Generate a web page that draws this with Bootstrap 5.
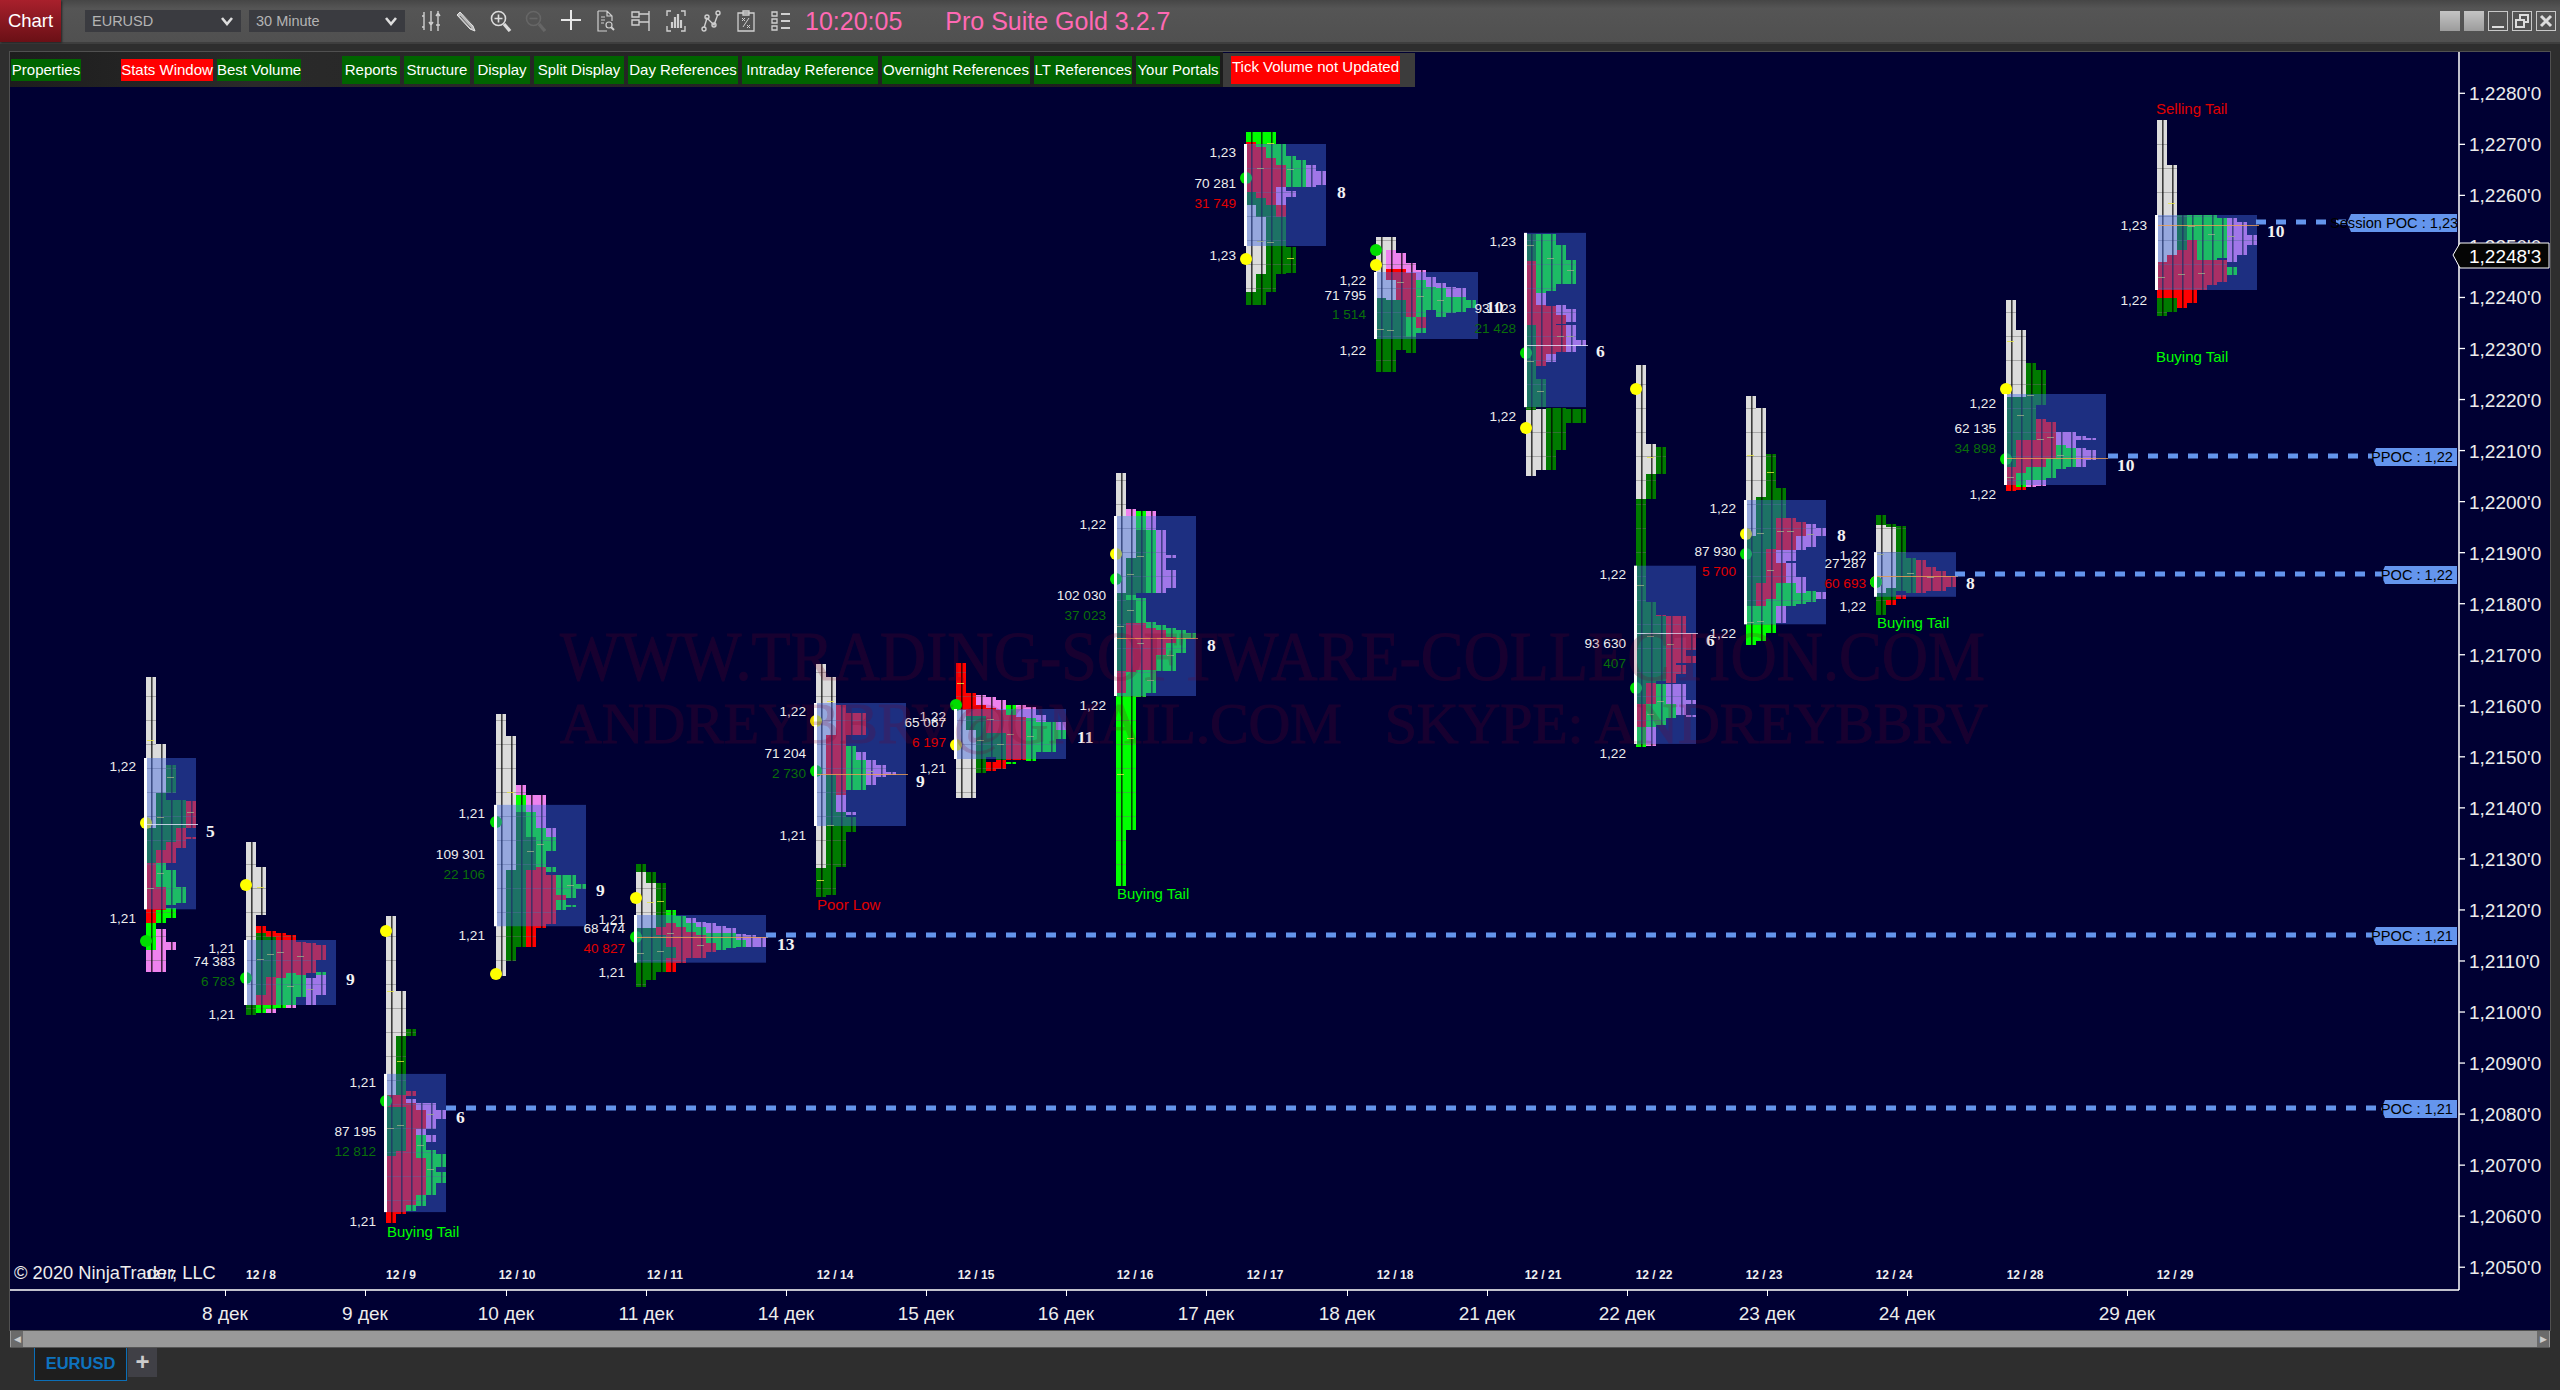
<!DOCTYPE html>
<html lang="ru">
<head>
<meta charset="utf-8">
<title>EURUSD Chart</title>
<link href="https://cdn.jsdelivr.net/npm/bootstrap@5.3.0/dist/css/bootstrap.min.css" rel="stylesheet">
<style>
html,body{height:100%;overflow:hidden}
body{background:#2e2e2e;font-family:"Liberation Sans",Arial,sans-serif;color:#eee}
.top-strip{height:44px;background:linear-gradient(#464646,#555 20%,#505050);border-bottom:2px solid #3e3e3e}
.chart-tab{width:61px;height:42px;background:linear-gradient(#a8202c,#6a1016);color:#fff;font-size:18.500px;line-height:42px;text-align:center;box-shadow:1px 1px 2px #222}
.combo-box{width:156px;height:22px;padding:0 0 0 7px;background-color:#3a3b40;border:0;border-radius:0;color:#b4b4b4;font-size:14.500px;line-height:22px;
 background-image:url("data:image/svg+xml,%3Csvg xmlns='http://www.w3.org/2000/svg' viewBox='0 0 14 10'%3E%3Cpath d='M2 2l5 6 5-6' fill='none' stroke='%23ddd' stroke-width='2.6'/%3E%3C/svg%3E");background-size:14px 10px;background-position:right 7px center}
.combo-box:focus{box-shadow:none;color:#b4b4b4;background-color:#3a3b40}
.tool-icon{width:35px;height:22px;flex:none}
.tool-icon svg{display:block;margin:auto}
.pink-time{color:#ff69b4;font-size:25px;line-height:30px;white-space:nowrap}
.time-gap{margin-left:7px}
.suite-gap{margin-left:43px}
.win-btn{width:20px;height:20px}
.win-solid{background:linear-gradient(#c4c4c4,#9c9c9c)}
.win-line{border:1px solid #c8c8c8}
.band{height:8px;background:#2e2e2e}
.chart-host{height:1278px;margin:0 10px;background:#000033;outline:1px solid #505050}
.chart-host svg{display:block}
.btn-row{top:0;left:0}
.btn-left{height:35px;width:1213px;background:linear-gradient(90deg,#1d1d1d,#2a2a2a 20%,#1c1c1c);padding-left:1px}
.tool-btn{background:#006400;color:#fff;font-size:15px;line-height:28px;height:28px;padding:0;border:0;border-radius:0;white-space:nowrap;text-align:center}
.tool-btn:hover{background:#006400;color:#fff}
.tool-low{height:22px;line-height:22px}
.tool-red,.tool-red:hover{background:#f00}
.wd-70{width:70px}.wd-92{width:92px}.wd-84{width:84px}.wd-58{width:58px}.wd-66{width:66px}.wd-56{width:56px}.wd-90{width:90px}.wd-110{width:110px}.wd-136{width:136px}.wd-148{width:148px}.wd-98{width:98px}
.gap-40{margin-left:40px}
.gap-41{margin-left:41px}
.warn-wrap{background:#3c3c3c;height:34px;padding:3px 15px 0 8px;margin-top:1px;width:192px}
.warn-chip{background:#f00;color:#fff;font-size:15px;height:28px;line-height:22px;white-space:nowrap;text-align:center}
.scroll-strip{height:18px;margin:0 10px;background:#999;border-bottom:1px solid #555}
.scroll-end{width:12px;height:16px;background:#6b6b6b;margin:1px;color:#ccc;font-size:9px;line-height:16px;text-align:center}
.tab-strip{height:34px;padding-left:34px}
.tab-active{width:93px;height:33px;background:#1e1e1e;border:1px solid #0b6fb8;border-top:0;color:#0e72bd;font-weight:700;font-size:16.500px;line-height:31px;text-align:center}
.tab-add{width:29px;height:29px;margin-left:1px;background:#404046;color:#ccc;font-size:24px;line-height:27px;text-align:center;font-weight:700}
text{font-family:"Liberation Sans",Arial,sans-serif}
.axis-t{font-size:19px;fill:#ececec}
.stat-t{font-size:13.6px;fill:#eee}
.copy-t{font-size:18.3px;fill:#eee}
.count-t{font-family:"Liberation Serif",serif;font-weight:700;font-size:17.500px;fill:#f2f2f2}
.tag-t{font-size:15px;fill:#fff}
.day-t{font-size:12px;font-weight:700;fill:#eee}
.poc-t{font-size:14.6px;fill:#000}
.mark-t{font-family:"Liberation Serif",serif;fill:#7a0028;opacity:.2;stroke:#7a0028;stroke-width:1}
</style>
</head>
<body class="d-flex flex-column m-0">

<div class="top-strip d-flex align-items-center">
  <div class="chart-tab flex-shrink-0">Chart</div>
  <div class="d-flex align-items-center gap-2 ms-4 me-2">
    <select class="form-select combo-box"><option>EURUSD</option></select>
    <select class="form-select combo-box"><option>30 Minute</option></select>
  </div>
  <div class="d-flex align-items-center">
    <div class="tool-icon"><svg width="20" height="22" fill="none" stroke="#cfcfcf" stroke-width="1.4"><path d="M3 2v18M10 1v20M17 1v20M1 6h2M1 17h2M8 12l2 3 2-3M15 6l2-3 2 3M15 15h4"/></svg></div>
    <div class="tool-icon"><svg width="22" height="22" fill="#bbb" stroke="#e4e4e4" stroke-width="1"><path d="M2 5l3-3 13 14 2 5-5-2z"/><path d="M5 6l11 12M8 4l11 12" stroke="#666"/></svg></div>
    <div class="tool-icon"><svg width="22" height="22" fill="none" stroke="#dcdcdc" stroke-width="1.6"><circle cx="8.5" cy="8.5" r="7"/><path d="M8.5 4.5v8M4.5 8.5h8"/><path d="M14 14l6 7" stroke-width="3.4"/></svg></div>
    <div class="tool-icon"><svg width="22" height="22" fill="none" stroke="#666" stroke-width="1.6"><circle cx="8.5" cy="8.5" r="7"/><path d="M4.5 8.5h8"/><path d="M14 14l6 7" stroke-width="3.4"/></svg></div>
    <div class="tool-icon"><svg width="20" height="20" fill="none" stroke="#e8e8e8" stroke-width="2"><path d="M10 0v20M0 10h20"/></svg></div>
    <div class="tool-icon"><svg width="20" height="22" fill="none" stroke="#cfcfcf" stroke-width="1.2"><path d="M2 1h9l5 5v5M2 1v20h9M11 1v5h5M5 7h4M5 10h4M5 13h3"/><circle cx="13" cy="15" r="3"/><path d="M15 17l3 3" stroke-width="2"/></svg></div>
    <div class="tool-icon"><svg width="20" height="22" fill="none" stroke="#cfcfcf" stroke-width="1.4"><path d="M1 2h7v5H1zM1 10h7v5H1zM8 4h10M8 12h10M18 1v20"/></svg></div>
    <div class="tool-icon"><svg width="20" height="22" fill="none" stroke="#cfcfcf" stroke-width="1.4"><path d="M5 1H1v5M15 1h4v5M5 21H1v-5M15 21h4v-5"/><path d="M6 18v-6M9 18V7M12 18V4M15 18v-8" stroke-width="2.2"/></svg></div>
    <div class="tool-icon"><svg width="20" height="22" fill="none" stroke="#cfcfcf" stroke-width="1.4"><path d="M3 18L6 8l7 7 4-11"/><circle cx="3" cy="19" r="2"/><circle cx="6" cy="7" r="2"/><circle cx="13" cy="15" r="2"/><circle cx="17" cy="3" r="2"/></svg></div>
    <div class="tool-icon"><svg width="20" height="22" fill="none" stroke="#cfcfcf" stroke-width="1.3"><path d="M2 3h16v18H2zM7 1h6v4H7z"/><path d="M6 8l3 3M9 8l-3 3M11 15l3 3M14 15l-3 3M13 8l-6 9" stroke-width="1"/></svg></div>
    <div class="tool-icon"><svg width="20" height="22" fill="none" stroke="#cfcfcf" stroke-width="1.3"><path d="M1 2h5v4H1zM1 9h5v4H1zM1 16h5v4H1z"/><path d="M10 4h9M10 11h9M10 18h9" stroke-width="2"/></svg></div>
  </div>
  <div class="pink-time time-gap">10:20:05</div>
  <div class="pink-time suite-gap">Pro Suite Gold 3.2.7</div>
  <div class="d-flex gap-1 ms-auto me-1">
    <div class="win-btn win-solid"></div>
    <div class="win-btn win-solid"></div>
    <div class="win-btn win-line d-flex align-items-end justify-content-center"><svg width="14" height="8"><path d="M1 5h12" stroke="#ddd" stroke-width="2"/></svg></div>
    <div class="win-btn win-line d-flex align-items-center justify-content-center"><svg width="14" height="14" fill="none" stroke="#ddd" stroke-width="2"><path d="M5 5V1h8v7H9M1 6h8v7H1z"/></svg></div>
    <div class="win-btn win-line d-flex align-items-center justify-content-center"><svg width="14" height="14"><path d="M2 2l10 10M12 2L2 12" stroke="#ddd" stroke-width="3"/></svg></div>
  </div>
</div>
<div class="band"></div>

<div class="chart-host position-relative">
  <svg id="chartSvg" width="2540" height="1278" viewBox="10 52 2540 1278" xmlns="http://www.w3.org/2000/svg"></svg>
  <div class="btn-row position-absolute d-flex align-items-start">
    <div class="btn-left d-flex align-items-center flex-shrink-0">
      <button class="btn tool-btn tool-low wd-70">Properties</button>
      <button class="btn tool-btn tool-low tool-red wd-92 gap-40">Stats Window</button>
      <button class="btn tool-btn tool-low wd-84 ms-1">Best Volume</button>
      <div class="d-flex gap-1 gap-41">
        <button class="btn tool-btn wd-58">Reports</button>
        <button class="btn tool-btn wd-66">Structure</button>
        <button class="btn tool-btn wd-56">Display</button>
        <button class="btn tool-btn wd-90">Split Display</button>
        <button class="btn tool-btn wd-110">Day References</button>
        <button class="btn tool-btn wd-136">Intraday Reference</button>
        <button class="btn tool-btn wd-148">Overnight References</button>
        <button class="btn tool-btn wd-98">LT References</button>
        <button class="btn tool-btn wd-84">Your Portals</button>
      </div>
    </div>
    <div class="warn-wrap flex-shrink-0"><div class="warn-chip">Tick Volume not Updated</div></div>
  </div>
</div>

<div class="scroll-strip d-flex justify-content-between">
  <div class="scroll-end">&#9664;</div>
  <div class="scroll-end">&#9654;</div>
</div>
<div class="tab-strip d-flex align-items-start">
  <div class="tab-active">EURUSD</div>
  <div class="tab-add">+</div>
</div>

<script>
var COL={g:'#dcdcdc',d:'#007a00',b:'#00ff00',r:'#ff0000',p:'#ee82ee'};
var S=[
{x:146,w:52,oy:660,sy:3,box:[294,748],cols:["g50-505 d505-610 r610-790 b790-870 p870-935","g252-400 d400-570 r570-610 b610-680 r680-750 b750-790 p807-935","d315-400 d420-545 r545-610 b630-735 b745-775 p845-870","d420-505 r505-565 b680-730","r423-505 r530-538"],poc:[824,'#e8e8ff']},
{x:246,w:92,oy:660,sy:3,box:[840,1035],cols:["g545-1035 d1035-1065","g620-765 r798-820 d820-1005 r1005-1035 b1035-1060","r812-830 d830-950 r950-1035 b1035-1048 p1048-1060","r820-955 b955-1045","r825-940 b940-1035 p1035-1045","r845-945 b945-1010","r850-940 p955-1035","r855-900 b935-945 p945-1005"]},
{x:386,w:62,oy:700,sy:2.851,box:[1066,1460],cols:["g615-1125 r1125-1160 d1160-1300 r1300-1490","g830-958 d958-1125 r1125-1160 d1160-1285 r1285-1465","d938-958 r1115-1130 p1138-1148 r1148-1440 b1440-1458","p1150-1170 r1170-1222 p1222-1240 b1240-1305 r1305-1410 b1410-1442","p1150-1222 p1240-1260 b1283-1410","p1170-1195 b1295-1330 b1345-1378"]},
{x:496,w:92,oy:700,sy:2.851,box:[299,645],cols:["g40-786","g103-485 d485-745","p242-272 b272-318 d318-705","p270-318 b318-392 d392-485 r485-705","p272-365 b365-475 r475-650","p365-392 b392-430 b475-490 r500-640","b500-555 r555-570 b570-600","b500-565 b585-590","b525-540"]},
{x:636,w:132,oy:650,sy:3,box:[795,938],cols:["d642-665 g665-835 d835-1010","d665-698 g698-835 d835-990","d698-830 r830-855 d855-965","b780-820 r820-890 d890-925 r925-965","b798-830 r830-940","p805-820 b820-845 r845-925","p815-830 b830-855 r855-925","p820-850 b850-880 r880-905","p828-850 b850-900","p835-850 b850-895","p852-870 b870-890","p855-890","p860-890"],poc:[937,'#f0a050']},
{x:816,w:92,oy:650,sy:3,box:[159,528],cols:["g42-655 d655-740","g82-255 r255-375 d375-735","r165-435 p435-485 d485-652","r190-255 b288-420 p485-495 d500-545","r190-255 p305-330 b330-420","p330-405","p345-380","p365-375"],poc:[774,'#f0a050']},
{x:956,w:112,oy:650,sy:3,box:[177,327],cols:["r40-180 g180-443","r130-198 d198-240 g240-443","p135-165 r165-198 d198-368","p140-175 r175-250 d250-320 r335-362","p150-180 r180-250 d250-330 r330-358","b165-195 r195-330 b335-342","p165-200 r200-330","p170-205 b205-332","p195-215 b215-305","b215-305","p215-240 b240-268"]},
{x:1116,w:82,oy:460,sy:3,box:[168,708],cols:["g40-400 d400-632 r632-700 b700-1278","p148-168 g168-295 d295-405 b405-420 d420-490 r490-635 b635-1110","b152-210 d210-400 b415-490 r490-630 b630-710","p152-210 b210-400 b485-505 r505-630 b630-700","p210-400 b495-510 r510-585 b585-632","p285-295 p330-385 b505-530 r530-550 b550-632","b510-580","b520-535"],poc:[638,'#f0a050']},
{x:1246,w:82,oy:120,sy:3,box:[72,378],cols:["b36-65 r65-215 d215-255 g255-515 d515-555","b36-80 r80-235 d235-290 g290-462 d462-555","b36-115 r115-255 d255-515","b72-135 r135-200 p200-255 r255-290 d290-462","b108-200 p212-232 d380-460","b120-200","p135-200","p152-195"]},
{x:1376,w:104,oy:120,sy:3,box:[456,657],cols:["g352-535 d535-756","g352-390 p390-448 r448-480 g480-540 d540-756","p400-448 r448-540 d540-690","p430-460 r460-590 b590-650 d650-700","p450-480 b480-590 r590-625 b625-640","p470-500 b500-570","p490-505 b505-590","p500-530 b530-580","p505-530 b530-575","b540-565"]},
{x:1526,w:62,oy:220,sy:2.8,box:[36,524],cols:["d40-115 r115-295 d295-532 g532-718","b40-205 p205-238 r238-410 d445-524 g530-700","b40-200 r240-375 p375-398 d525-700","b70-180 p238-265 r265-290 r294-370 d525-645","b112-178 p250-285 p295-370 d530-568","p335-352 d530-568"],poc:[345,'#e8e8ff']},
{x:1636,w:62,oy:220,sy:2.8,box:[968,1467],cols:["g405-780 d780-1355 r1355-1420 b1420-1475","g627-710 d710-780 d1070-1295 r1295-1355 b1355-1420 p1420-1472","d636-710 r1105-1110 d1110-1290 b1300-1415","r1110-1295 p1298-1355 b1355-1395","r1110-1240 r1245-1270 p1300-1385","r1155-1205 r1220-1240 p1345-1355 p1385-1392"],poc:[633,'#e8e8ff']},
{x:1746,w:82,oy:220,sy:2.8,box:[784,1132],cols:["g493-885 d885-1080 b1080-1190","g525-775 d775-1015 r1015-1080 b1080-1180","d655-775 d775-920 r920-1060 b1060-1155","d750-835 r835-925 p925-960 r960-1015 b1015-1080 p1080-1128","r835-925 p925-955 p960-1015 b1015-1080","r845-885 p885-925 p1000-1045 b1045-1075","p850-915 b1040-1070","p862-885 p1042-1060"]},
{x:1876,w:82,oy:220,sy:2.8,box:[930,1055],cols:["d825-853 g853-1045 d1045-1105","d852-860 g860-1030 d1030-1065 r1065-1078","d858-1040 r1050-1060","d945-1045","r952-1045","r972-1040","r982-1040","r998-1028"],poc:[576,'#f0a050']},
{x:2006,w:102,oy:380,sy:3,box:[42,315],cols:["g-240-50 d50-260 r260-333","g-150-50 d50-180 r180-280 b280-322 r322-330","d-50-180 r180-260 b260-300 p300-320","d-30-75 r118-262 b262-300 p300-318","r125-235 b235-295","p155-195 b195-268","p155-205 b205-262","p168-180 p205-262","p175-180 p210-240"],poc:[458,'#f0a050']},
{x:2157,w:102,oy:0,sy:1,box:[215,290],cols:["g120-262 r262-298 d298-316","g165-255 r255-298 d298-312","d215-250 r250-308","b215-240 r240-303","b215-260 r260-290","b215-260 r260-285","b218-258 r260-282","p218-262 b267-275","p222-255","p235-245"],poc:[225,'#f0a050']}
];
var out=[];
function R(x,y,w,h,f,o){out.push('<rect x="'+x+'" y="'+y+'" width="'+w+'" height="'+h+'" fill="'+f+'"'+(o?' opacity="'+o+'"':'')+'/>');}
function T(x,y,s,cls,fill,anchor){out.push('<text x="'+x+'" y="'+y+'" class="'+cls+'"'+(fill?' style="fill:'+fill+'"':'')+(anchor?' text-anchor="'+anchor+'"':'')+'>'+s+'</text>');}
function D(x,y,c){out.push('<circle cx="'+x+'" cy="'+y+'" r="6" fill="'+c+'"/>');}

R(10,52,2540,1278,'#000033');
var Y='#ffff00',G='#00dd00';
var dots=[[146,823,Y],[146,941,G],[246,885,Y],[246,978,G],[386,931,Y],[386,1101,G],[496,822,G],[496,974,Y],[636,898,Y],[636,937,G],[816,721,Y],[816,771,G],[956,705,G],[956,745,Y],[1116,554,Y],[1116,579,G],[1246,178,G],[1246,259,Y],[1376,250,G],[1376,265,Y],[1526,353,G],[1526,428,Y],[1636,389,Y],[1636,688,G],[1746,534,Y],[1746,554,G],[1876,582,Y],[1876,582,G],[2006,389,Y],[2006,459,G]];

S.forEach(function(s,si){
  var left=s.x;
  s.cols.forEach(function(c,i){
    var cx=left+i*10;
    c.split(' ').forEach(function(tok,ti){
      var m=tok.match(/^([gdbrp])(-?\d+)-(-?\d+)$/);
      var y1=Math.round(s.oy+ +m[2]/s.sy),y2=Math.round(s.oy+ +m[3]/s.sy),h=y2-y1;
      R(cx,y1,10,h,COL[m[1]]);
      for(var ly=y1+(24-(y1%24));ly<y2;ly+=24)R(cx,ly,10,1,'#6a6a6a','.45');
      R(cx+5,y1,1.6,h,'#000','.72');
      if(h>22&&(i+ti+si)%2==0){R(cx+1,Math.round(y1+h*.42),7,1,'#e6e640','.8');}
    });
  });
});
dots.forEach(function(d){D(d[0],d[1],d[2]);});
S.forEach(function(s){
  var y1=s.oy+s.box[0]/s.sy,y2=s.oy+s.box[1]/s.sy;
  R(s.x-2,y1,s.w,y2-y1,'#4169e1','.45');
  R(s.x-2,y1,3,y2-y1,'#fff');
  if(s.poc)R(s.x+1,s.poc[0],s.w-1,1,s.poc[1],'.8');
});

var pocs=[[446,1108,2385,'POC : 1,21'],[766,935,2376,'PPOC : 1,21'],[1955,574,2385,'POC : 1,22'],[2108,456,2376,'PPOC : 1,22'],[2256,222,2351,'Session POC : 1,23']];
out.push('<defs><clipPath id="tagClip"><rect x="10" y="52" width="2447" height="1238"/></clipPath></defs>');
pocs.forEach(function(p){
  out.push('<line x1="'+p[0]+'" y1="'+p[1]+'" x2="'+p[2]+'" y2="'+p[1]+'" stroke="#6495ed" stroke-width="5" stroke-dasharray="10 10"/>');
  var tx=p[2],ty=p[1]-8;
  out.push('<polygon points="'+(tx-4)+','+(ty+9)+' '+tx+','+ty+' 2457,'+ty+' 2457,'+(ty+18)+' '+tx+','+(ty+18)+'" fill="#6495ed"/>');
  if(p[3].charAt(0)=='S')out.push('<text x="2330" y="'+(ty+14)+'" class="poc-t" clip-path="url(#tagClip)">'+p[3]+'</text>');
  else T(2453,ty+14,p[3],'poc-t','','end');
});

var g='#0a6e0a',r='#e00000';
var L=[
[136,771,'1,22',0,'',0,'','',923,'1,21',206,837,'5'],
[235,953,'1,21',966,'74 383',986,'6 783',g,1019,'1,21',346,985,'9'],
[376,1087,'1,21',1136,'87 195',1156,'12 812',g,1226,'1,21',456,1123,'6'],
[485,818,'1,21',859,'109 301',879,'22 106',g,940,'1,21',596,896,'9'],
[625,924,'1,21',933,'68 474',953,'40 827',r,977,'1,21',777,950,'13'],
[806,716,'1,22',758,'71 204',778,'2 730',g,840,'1,21',916,787,'9'],
[946,721,'1,22',727,'65 067',747,'6 197',r,773,'1,21',1077,743,'11'],
[1106,529,'1,22',600,'102 030',620,'37 023',g,710,'1,22',1207,651,'8'],
[1236,157,'1,23',188,'70 281',208,'31 749',r,260,'1,23',1337,198,'8'],
[1366,285,'1,22',300,'71 795',319,'1 514',g,355,'1,22',1486,313,'10'],
[1516,246,'1,23',313,'93 123',333,'21 428',g,421,'1,22',1596,357,'6'],
[1626,579,'1,22',648,'93 630',668,'407',g,758,'1,22',1706,646,'6'],
[1736,513,'1,22',556,'87 930',576,'5 700',r,638,'1,22',1837,541,'8'],
[1866,560,'1,22',568,'27 287',588,'60 693',r,611,'1,22',1966,589,'8'],
[1996,408,'1,22',433,'62 135',453,'34 898',g,499,'1,22',2117,471,'10'],
[2147,230,'1,23',0,'',0,'','',305,'1,22',2267,237,'10']
];
L.forEach(function(a){
  T(a[0],a[1],a[2],'stat-t','','end');
  if(a[4])T(a[0],a[3],a[4],'stat-t','','end');
  if(a[6])T(a[0],a[5],a[6],'stat-t',a[7],'end');
  T(a[0],a[8],a[9],'stat-t','','end');
  T(a[10],a[11],a[12],'count-t');
});
T(817,910,'Poor Low','tag-t','#e00000');
T(1117,899,'Buying Tail','tag-t','#00ff00');
T(387,1237,'Buying Tail','tag-t','#00ff00');
T(1877,628,'Buying Tail','tag-t','#00ff00');
T(2156,362,'Buying Tail','tag-t','#00ff00');
T(2156,114,'Selling Tail','tag-t','#e00000');

var ax=2459,ay=1290;
out.push('<path d="M'+ax+' 52V'+ay+'M10 '+ay+'H'+ax+'" stroke="#fff" stroke-width="1.5" fill="none"/>');
for(var i=0;i<=23;i++){
  var yy=93.3+51.04*i,v=2280-i*10;
  out.push('<path d="M'+ax+' '+yy+'h6" stroke="#fff" stroke-width="1.3"/>');
  T(2469,yy+7,'1,'+v+"'0",'axis-t');
}
var days=[[225,'8'],[365,'9'],[506,'10'],[646,'11'],[786,'14'],[926,'15'],[1066,'16'],[1206,'17'],[1347,'18'],[1487,'21'],[1627,'22'],[1767,'23'],[1907,'24'],[2127,'29']];
days.forEach(function(d){
  out.push('<path d="M'+d[0]+'.5 '+ay+'v6" stroke="#fff" stroke-width="1"/>');
  T(d[0],1320,d[1]+' дек','axis-t','','middle');
});
T(14,1279,'© 2020 NinjaTrader, LLC','copy-t');
[[161,'12 / 7'],[261,'12 / 8'],[401,'12 / 9'],[517,'12 / 10'],[665,'12 / 11'],[835,'12 / 14'],[976,'12 / 15'],[1135,'12 / 16'],[1265,'12 / 17'],[1395,'12 / 18'],[1543,'12 / 21'],[1654,'12 / 22'],[1764,'12 / 23'],[1894,'12 / 24'],[2025,'12 / 28'],[2175,'12 / 29']].forEach(function(d){T(d[0],1279,d[1],'day-t','','middle');});

out.push('<polygon points="2453,255 2460,243 2549,243 2549,268 2460,268" fill="#050505" stroke="#fff" stroke-width="1"/>');
T(2469,263,"1,2248'3",'axis-t','#fff');

out.push('<text x="560" y="680" class="mark-t" font-size="70" textLength="1425" lengthAdjust="spacingAndGlyphs">WWW.TRADING-SOFTWARE-COLLECTION.COM</text>');
out.push('<text x="560" y="743" class="mark-t" font-size="58" textLength="1428" lengthAdjust="spacing" xml:space="preserve">ANDREYBBRV@GMAIL.COM   SKYPE: ANDREYBBRV</text>');

document.getElementById('chartSvg').innerHTML=out.join('');
</script>
<script src="https://cdn.jsdelivr.net/npm/bootstrap@5.3.0/dist/js/bootstrap.bundle.min.js"></script>
</body>
</html>
